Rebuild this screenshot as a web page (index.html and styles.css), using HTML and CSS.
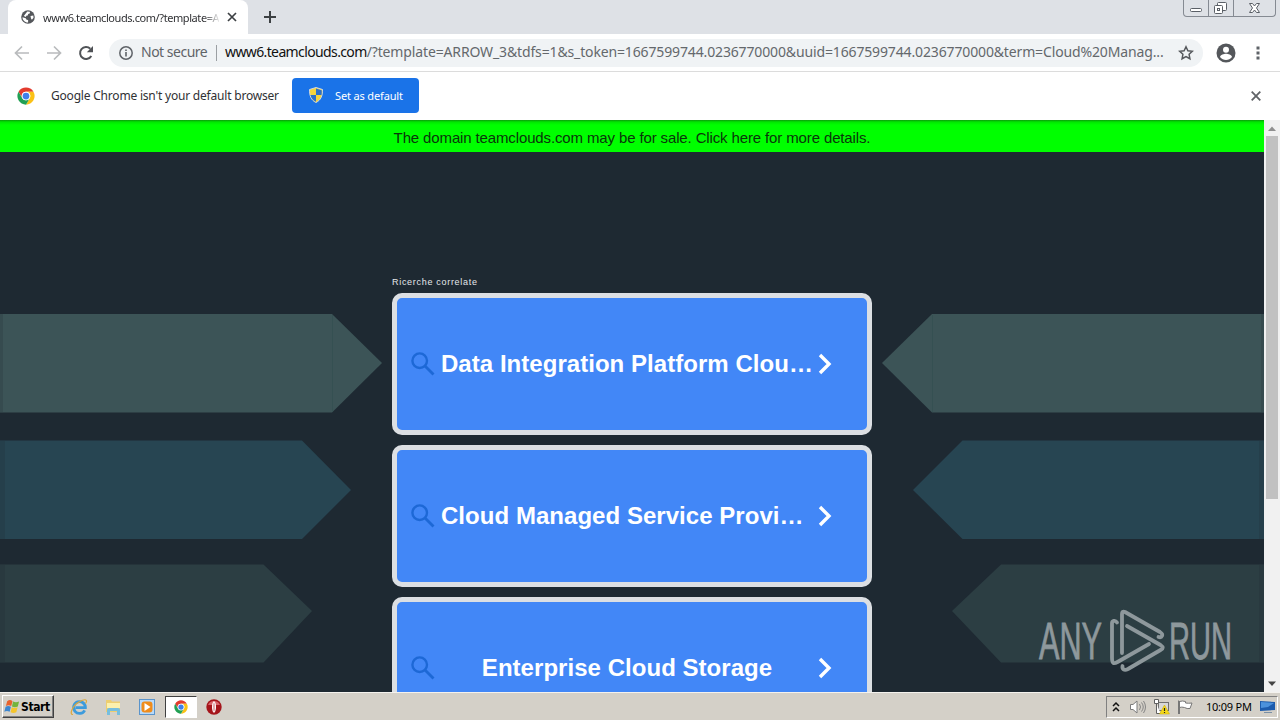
FILE: index.html
```html
<!DOCTYPE html>
<html lang="it">
<head>
  <meta charset="UTF-8">
  <meta name="viewport" content="width=device-width, initial-scale=1.0">
  <title>www6.teamclouds.com</title>
  <link rel="stylesheet" href="styles.css">
</head>
<body>
  <svg width="0" height="0" class="defs">
    <defs>
      <symbol id="chrome" viewBox="0 0 48 48">
        <circle cx="24" cy="24" r="23" fill="#fff"/>
        <path d="M4.1 12.5A23 23 0 0 1 43.9 12.5H24a11.5 11.5 0 0 0-10 17.2z" fill="#e33b2e"/>
        <path d="M43.9 12.5A23 23 0 0 1 24 47l10-17.3A11.5 11.5 0 0 0 24 12.5z" fill="#fbc116"/>
        <path d="M24 47A23 23 0 0 1 4.1 12.5L14 29.7a11.5 11.5 0 0 0 20 0z" fill="#21a054"/>
        <circle cx="24" cy="24" r="11.5" fill="#fff"/>
        <circle cx="24" cy="24" r="9" fill="#3f7fea"/>
      </symbol>
      <symbol id="search" viewBox="0 0 24 24">
        <circle cx="8.700" cy="8.700" r="7.300" fill="none" stroke="#1d68d6" stroke-width="2.400"/>
        <path d="M14 14L22.500 22.500" stroke="#1d68d6" stroke-width="2.800"/>
      </symbol>
      <symbol id="chevron" viewBox="0 0 14 22">
        <path d="M2 2l9 9-9 9" fill="none" stroke="#fff" stroke-width="3.400"/>
      </symbol>
    </defs>
  </svg>

  <div class="tabstrip">
    <div class="tab">
      <svg class="globe" width="14" height="14" viewBox="0 0 14 14">
        <circle cx="7" cy="7" r="6.800" fill="#54575b"/>
        <path d="M1.500 7.200l3.200 1 .900 1.600 1.500.300v2.500C3.500 12.300 1.500 9.800 1.500 7.200zM6.300 1.600l2.500.100.200 1.600-1.800.700-.500 1.500-1.500.300-.200 1.200-2.200-1zM9.500 6l2.800-.500.200 2.300-1.600 2-.900-1.200z" fill="#fff"/>
      </svg>
      <span class="tab-title">www6.teamclouds.com/?template=A</span>
      <svg class="tab-close" width="10" height="10" viewBox="0 0 10 10"><path d="M1 1l8 8M9 1l-8 8" stroke="#3c4043" stroke-width="1.700"/></svg>
    </div>
    <svg class="new-tab" width="12" height="12" viewBox="0 0 12 12"><path d="M6 0v12M0 6h12" stroke="#3c4043" stroke-width="2"/></svg>
    <div class="window-buttons">
      <span class="wb wb-min"><svg width="24" height="16" viewBox="0 0 24 16"><rect x="6.500" y="8.500" width="11" height="3" rx="1" fill="#fff" stroke="#5a5f66"/></svg></span>
      <span class="wb wb-max"><svg width="24" height="16" viewBox="0 0 24 16"><g fill="#fff" stroke="#5a5f66"><rect x="8.500" y="2.500" width="9" height="8" rx="1"/><rect x="5.500" y="5.500" width="8" height="8" rx="1"/><rect x="8.500" y="8.500" width="2" height="2"/></g></svg></span>
      <span class="wb wb-close"><svg width="41" height="16" viewBox="0 0 41 16"><path d="M15.500 3.500h3l2 2.500 2-2.500h3L22.500 8l3 4.500h-3l-2-2.500-2 2.500h-3L18.500 8z" fill="#fff" stroke="#5a5f66"/></svg></span>
    </div>
  </div>

  <div class="toolbar">
    <svg class="nav" width="16" height="16" viewBox="0 0 16 16"><path d="M15 8H2M8 1.500L1.500 8 8 14.500" fill="none" stroke="#b9bbbd" stroke-width="1.700"/></svg>
    <svg class="nav" width="16" height="16" viewBox="0 0 16 16"><path d="M1 8h13M8 1.500L14.500 8 8 14.500" fill="none" stroke="#b9bbbd" stroke-width="1.700"/></svg>
    <svg class="nav" width="16" height="16" viewBox="0 0 16 16"><path d="M13.300 11A6 6 0 1 1 12.300 3.700" fill="none" stroke="#505357" stroke-width="2"/><path d="M15 1v6.200H8.800z" fill="#505357"/></svg>
    <div class="omnibox">
      <svg width="14" height="14" viewBox="0 0 14 14"><circle cx="7" cy="7" r="6.200" fill="none" stroke="#5f6368" stroke-width="1.500"/><path d="M7 6v4.500M7 3.400v1.600" stroke="#5f6368" stroke-width="1.600"/></svg>
      <span class="secure">Not secure</span>
      <span class="divider"></span>
      <span class="url"><b>www6.teamclouds.com</b><span class="url-path">/?template=ARROW_3&amp;tdfs=1&amp;s_token=1667599744.0236770000&amp;uuid=1667599744.0236770000&amp;term=Cloud%20Manag...</span></span>
      <svg class="star" width="16" height="16" viewBox="0 0 16 16"><path d="M8 1.800l1.900 4 4.400.500-3.200 3 .800 4.400L8 11.500l-3.900 2.200.800-4.400-3.200-3 4.400-.500z" fill="none" stroke="#55585c" stroke-width="1.500"/></svg>
    </div>
    <svg class="avatar" width="20" height="20" viewBox="0 0 20 20"><circle cx="10" cy="10" r="9.500" fill="#54575b"/><circle cx="10" cy="6.800" r="3" fill="#fff"/><path d="M4 14c.300-2.400 4-3.200 6-3.200s5.700.800 6 3.200c-3 4-9 4-12 0z" fill="#fff"/></svg>
    <svg class="dots" width="4" height="14" viewBox="0 0 4 14"><path d="M.500.500h3v3h-3zM.500 5.500h3v3h-3zM.500 10.500h3v3h-3z" fill="#5f6368"/></svg>
  </div>

  <div class="infobar">
    <svg width="18" height="18"><use href="#chrome"/></svg>
    <span class="info-text">Google Chrome isn't your default browser</span>
    <button class="set-default">
      <svg width="14" height="16" viewBox="0 0 14 16">
        <path d="M7 .500L13.500 2.500C13.500 9 12 13 7 15.500 2 13 .500 9 .500 2.500z" fill="#f7d439" stroke="#cfd8e0"/>
        <path d="M7 8V1.500L12.700 3.200Q12.900 6 12.500 8zM7 8H1.500C2.200 11 4 13.500 7 14.700z" fill="#2d70c8"/>
      </svg>
      <span>Set as default</span>
    </button>
    <svg class="info-close" width="10" height="10" viewBox="0 0 10 10"><path d="M.700.700l8.600 8.600M9.300.700L.700 9.300" stroke="#606367" stroke-width="1.800"/></svg>
  </div>

  <div class="viewport">
    <div class="page">
      <div class="sale-banner">The domain teamclouds.com may be for sale. Click here for more details.</div>
      <div class="columns">
        <svg class="arrows" width="392" height="540" viewBox="0 0 392 540">
          <path d="M0 162h332l50 49-50 49.500H0z" fill="#3c5457"/>
          <path d="M0 288.500h302l49 49.500-49 49H0z" fill="#274552"/>
          <path d="M0 412.500h263.500L312 459l-48.500 51.500H0z" fill="#2c3e43"/>
          <path d="M0 162h3v98H0zM0 289h5v98H0zM0 413h5v97H0z" fill="#1e2932" opacity=".2"/>
          <path d="M332.500 163v97" stroke="#355052"/>
        </svg>
        <div class="related">
          <div class="related-label">Ricerche correlate</div>
          <a class="card">
            <svg class="search" width="24" height="24"><use href="#search"/></svg>
            <span class="card-title">Data Integration Platform Clou…</span>
            <svg class="chevron" width="14" height="22"><use href="#chevron"/></svg>
          </a>
          <a class="card">
            <svg class="search" width="24" height="24"><use href="#search"/></svg>
            <span class="card-title">Cloud Managed Service Provi…</span>
            <svg class="chevron" width="14" height="22"><use href="#chevron"/></svg>
          </a>
          <a class="card">
            <svg class="search" width="24" height="24"><use href="#search"/></svg>
            <span class="card-title center">Enterprise Cloud Storage</span>
            <svg class="chevron" width="14" height="22"><use href="#chevron"/></svg>
          </a>
        </div>
        <svg class="arrows" width="392" height="540" viewBox="0 0 392 540">
          <path d="M392 162H60l-50 49 50 49.500h332z" fill="#3c5457"/>
          <path d="M392 288.500H90.500l-49.500 49.500 49.500 49H392z" fill="#274552"/>
          <path d="M392 412.500H129L80 459l49 51.500h263z" fill="#2c3e43"/>
          <path d="M389 162h3v98h-3zM387 289h5v98h-5zM387 413h5v97h-5z" fill="#1e2932" opacity=".2"/>
          <path d="M60.500 163v97" stroke="#355052"/>
        </svg>
      </div>
    </div>
    <div class="scrollbar">
      <svg width="16" height="16" viewBox="0 0 16 16"><path d="M4 11h8L8 6.500z" fill="#8f8f8f"/></svg>
      <div class="thumb"></div>
      <svg class="scroll-down" width="16" height="16" viewBox="0 0 16 16"><path d="M4 5.500h8L8 10z" fill="#444"/></svg>
    </div>
    <svg class="watermark" width="204" height="64" viewBox="0 0 204 64">
      <text x="1" y="49.500" textLength="63" lengthAdjust="spacingAndGlyphs">ANY</text>
      <g fill="none" stroke="#8e989c" stroke-width="3.800" stroke-linejoin="round" stroke-linecap="round">
        <path d="M79 13.500c-2-3-5-1.500-5 1V49c0 6 2 6 5.500 4L111 35"/>
        <path d="M84 44V5c0-2 1-3 3-2l35 20c4 2.500 2 6-1.500 5"/>
        <path d="M89 17l33.500 19c3 2 3 3.500 0 5L90 60c-4 2-6 0-5.500-3"/>
      </g>
      <text x="131" y="49.500" textLength="63" lengthAdjust="spacingAndGlyphs">RUN</text>
    </svg>
  </div>

  <div class="taskbar">
    <div class="start">
      <svg width="17" height="17" viewBox="0 0 16 16">
        <path d="M3 3c2-1.500 3.500-1.200 5 0L6.800 7.500c-1.800-1-3.200-1-5 0z" fill="#e8622c"/>
        <path d="M8.500 3.300c2 1 3.500 1 5.700 0L13 8c-2 1-3.500 1-5.500 0z" fill="#74b43c"/>
        <path d="M1.500 8.200c1.800-1 3.200-1 5 0L5.300 13c-1.800-1-3.200-1-5 0z" fill="#3c86cf"/>
        <path d="M7.300 8.600c1.800 1 3.500 1 5.500 0l-1.200 4.700c-2 1-3.500 1-5.400 0z" fill="#f5c52c"/>
      </svg>
      <span>Start</span>
    </div>
    <div class="quick">
      <svg width="18" height="18" viewBox="0 0 18 18"><path d="M14.700 12.300A5.900 5.900 0 1 1 15.400 9.700H5.500" fill="none" stroke="#3d9bdc" stroke-width="2.800"/><path d="M3 16.500C-1 17 2 8 9 4s9-2 6.500 1.500" fill="none" stroke="#dda83b" stroke-width="1.200"/></svg>
      <svg width="18" height="18" viewBox="0 0 18 18"><path d="M2 2h5l1 1.500h8V14H2z" fill="#edce70"/><path d="M3 5h13v5H3z" fill="#fbf0ad"/><path d="M3 17v-5q0-2 2-2h9q2 0 2 2v5h-3v-4H6v4z" fill="#76bede"/></svg>
      <svg width="18" height="18" viewBox="0 0 18 18"><rect x="1.500" y="1.500" width="15" height="15" fill="#b8dafa" stroke="#5a94cb"/><rect x="3.500" y="3.500" width="11" height="11" rx="3" fill="#ef8c1b"/><path d="M6.500 5l6 4-6 4z" fill="#fff"/></svg>
    </div>
    <div class="task-active"><svg width="14" height="14"><use href="#chrome"/></svg></div>
    <svg class="opera" width="16" height="16" viewBox="0 0 16 16"><circle cx="8" cy="8" r="7.700" fill="#a5151b"/><path d="M2 6a6.500 6.500 0 0 1 12 0z" fill="#d9646a"/><ellipse cx="8" cy="8" rx="2" ry="5.800" fill="#fff"/><ellipse cx="8" cy="8" rx=".400" ry="4.500" fill="#b5242b"/></svg>
    <div class="tray">
      <svg width="8" height="12" viewBox="0 0 8 12"><path d="M1 5l3-3 3 3M1 10l3-3 3 3" fill="none" stroke="#111" stroke-width="1.500"/></svg>
      <svg class="vol" width="18" height="16" viewBox="0 0 18 16"><path d="M1.500 5.500h2.500L8 2v12l-4-3.500H1.500z" fill="#fff" stroke="#7c7c7c"/><path d="M10.500 5q2 3 0 6M12.500 3.500q3.500 4.500 0 9M14.500 2q4 6 0 12" fill="none" stroke="#858585"/></svg>
      <svg class="net" width="17" height="17" viewBox="0 0 17 17"><rect x="5.500" y="4.500" width="10" height="8" fill="#d8d8d8" stroke="#707070"/><path d="M1.500 1.500h4v4h-4zM3.500 5.500v10h4" fill="#fff" stroke="#606060"/><path d="M11.500 7l5 9h-10z" fill="#f5d918" stroke="#c9a900" stroke-width=".500"/><path d="M11.500 10v3M11.500 14v1" stroke="#222" stroke-width="1.200"/></svg>
      <svg class="flag" width="17" height="16" viewBox="0 0 17 16"><path d="M1.500 15V1.500M2.500 15V2M2.500 2.500q3-1 6 0V4q3 .500 6.500 0l-2 5.500q-3 .500-5.500-1-3-.800-5 0" fill="#fff" stroke="#777"/></svg>
      <span class="clock">10:09 PM</span>
      <svg class="desktop" width="15" height="14" viewBox="0 0 15 14"><path d="M0 1l15 1v8L0 11z" fill="#1c5bad"/><path d="M1 2l13 1-6 4-7 1z" fill="#4b91dc"/><path d="M4 12h8v1H4z" fill="#7a8fa5"/></svg>
    </div>
  </div>
</body>
</html>
```
FILE: styles.css
```css
* {
  box-sizing: border-box;
}
body {
  margin: 0;
  width: 1280px;
  height: 720px;
  overflow: hidden;
  display: flex;
  flex-direction: column;
  font-family: 'Noto Sans', 'Open Sans', sans-serif;
  color: #303134;
}
svg {
  display: block;
  flex: none;
}
.defs {
  position: absolute;
}

/* browser chrome */
.tabstrip {
  height: 34px;
  flex: none;
  background: #dee1e6;
  display: flex;
  align-items: flex-start;
}
.tab {
  width: 240px;
  height: 34px;
  margin-left: 8px;
  padding-left: 13px;
  background: #fff;
  border-radius: 8px 8px 0 0;
  display: flex;
  align-items: center;
}
.tab-title {
  width: 176px;
  margin-left: 8px;
  white-space: nowrap;
  font-size: 11px;
  letter-spacing: -0.42px;
  -webkit-mask-image: linear-gradient(to right, #000 160px, transparent 178px);
}
.tab-close {
  margin-left: 8px;
}
.new-tab {
  margin: 11px 0 0 16px;
}
.window-buttons {
  display: flex;
  margin-left: auto;
  margin-right: 4px;
  height: 17px;
  border: 1px solid #858a92;
  border-top: 0;
  border-radius: 0 0 4px 4px;
}
.wb + .wb {
  border-left: 1px solid #858a92;
}
.toolbar {
  height: 38px;
  flex: none;
  background: #fff;
  border-bottom: 1px solid #dcdcdc;
  display: flex;
  align-items: center;
  padding-left: 14px;
}
.nav {
  margin-right: 16px;
}
.omnibox {
  width: 1094px;
  height: 28px;
  margin-left: -1px;
  padding-left: 10px;
  border-radius: 14px;
  background: #f0f3f5;
  display: flex;
  align-items: center;
  font-size: 14px;
  white-space: nowrap;
}
.secure,
.url {
  padding-bottom: 2px;
}
.secure {
  margin-left: 8px;
  width: 67px;
  color: #5f6368;
  letter-spacing: -0.5px;
}
.divider {
  width: 1px;
  height: 16px;
  margin: 0 8px;
  background: #9b9fa3;
}
.url {
  width: 939px;
  letter-spacing: -0.14px;
}
.url b {
  font-weight: 400;
  color: #111;
  letter-spacing: -0.62px;
}
.url-path {
  color: #64686c;
}
.star {
  margin-left: 14px;
}
.avatar {
  margin-left: 13px;
}
.dots {
  margin-left: 20px;
}
.infobar {
  height: 48px;
  flex: none;
  background: #fff;
  display: flex;
  align-items: center;
  padding: 0 19px 1px 17px;
}
.info-text {
  width: 228px;
  margin-left: 16px;
  padding-bottom: 1px;
  white-space: nowrap;
  font-size: 12px;
  letter-spacing: -0.2px;
}
.set-default {
  width: 127px;
  height: 35px;
  margin-left: 13px;
  padding: 0 0 1px 17px;
  border: 0;
  border-radius: 4px;
  background: #1a73e8;
  color: #fff;
  font-family: inherit;
  font-size: 11px;
  letter-spacing: -0.15px;
  white-space: nowrap;
  display: flex;
  align-items: center;
  gap: 12px;
}
.info-close {
  margin-left: auto;
}

/* parked page */
.viewport {
  position: relative;
  height: 572px;
  flex: none;
  display: flex;
  overflow: hidden;
}
.page {
  width: 1264px;
  background: #1e2932;
}
.sale-banner {
  height: 32px;
  background: linear-gradient(#0b9a0b, #00e800 2px, #00ff00 5px);
  color: #0b350b;
  font: 15px/35px 'Liberation Sans', Arial, sans-serif;
  letter-spacing: -0.13px;
  text-align: center;
}
.columns {
  display: grid;
  grid-template-columns: 392px 480px 392px;
}
.related {
  font-family: 'Liberation Sans', Arial, sans-serif;
  display: flex;
  flex-direction: column;
  gap: 10px;
}
.related-label {
  height: 131px;
  padding-top: 124px;
  color: #e4e8ea;
  font-size: 9px;
  line-height: 12px;
  letter-spacing: 0.7px;
}
.card {
  height: 142px;
  flex: none;
  padding-left: 14px;
  border: 5px solid #dcdfe3;
  border-radius: 10px;
  background: #4287f7;
  display: flex;
  align-items: center;
}
.card-title {
  width: 372px;
  margin-left: 6px;
  white-space: nowrap;
  color: #fff;
  font-size: 24px;
  font-weight: 700;
  letter-spacing: 0.04px;
}
.center {
  text-align: center;
}
.chevron {
  margin-left: 5px;
}
.scrollbar {
  width: 16px;
  background: #f1f1f1;
  display: flex;
  flex-direction: column;
}
.thumb {
  width: 12px;
  height: 363px;
  margin-left: 2px;
  background: #c1c1c1;
}
.scroll-down {
  margin-top: auto;
}
.watermark {
  position: absolute;
  left: 1038px;
  top: 489px;
}
.watermark text {
  font: 51px 'Liberation Sans', Arial, sans-serif;
  fill: #8e989c;
  stroke: #8e989c;
  stroke-width: 0.8px;
}

/* taskbar */
.taskbar {
  height: 28px;
  flex: none;
  background: #d4d0c8;
  border-top: 1px solid #f4f2ee;
  display: flex;
  align-items: center;
}
.start {
  width: 52px;
  height: 23px;
  margin-left: 2px;
  padding-left: 1px;
  border: 1px solid;
  border-color: #fff #404040 #404040 #fff;
  box-shadow: inset -1px -1px #808080;
  display: flex;
  align-items: center;
  color: #000;
  font: bold 12px 'DejaVu Sans Condensed', 'DejaVu Sans', sans-serif;
  letter-spacing: -0.4px;
}
.quick {
  display: flex;
  gap: 16px;
  margin-left: 16px;
}
.task-active {
  width: 32px;
  height: 22px;
  margin-left: 9px;
  border: 1px solid;
  border-color: #404040 #fff #fff #404040;
  background: #fff;
  display: flex;
  align-items: center;
  justify-content: center;
}
.opera {
  margin-left: 9px;
}
.tray {
  width: 172px;
  height: 22px;
  margin-left: auto;
  margin-right: 2px;
  padding-left: 5px;
  border: 1px solid;
  border-color: #808080 #fff #fff #808080;
  display: flex;
  align-items: center;
}
.vol {
  margin-left: 9px;
}
.net {
  margin-left: 6px;
}
.flag {
  margin-left: 7px;
}
.clock {
  width: 45px;
  margin-left: 12px;
  white-space: nowrap;
  color: #000;
  font-size: 11px;
  letter-spacing: -0.25px;
}
.desktop {
  margin-left: 9px;
}
```
